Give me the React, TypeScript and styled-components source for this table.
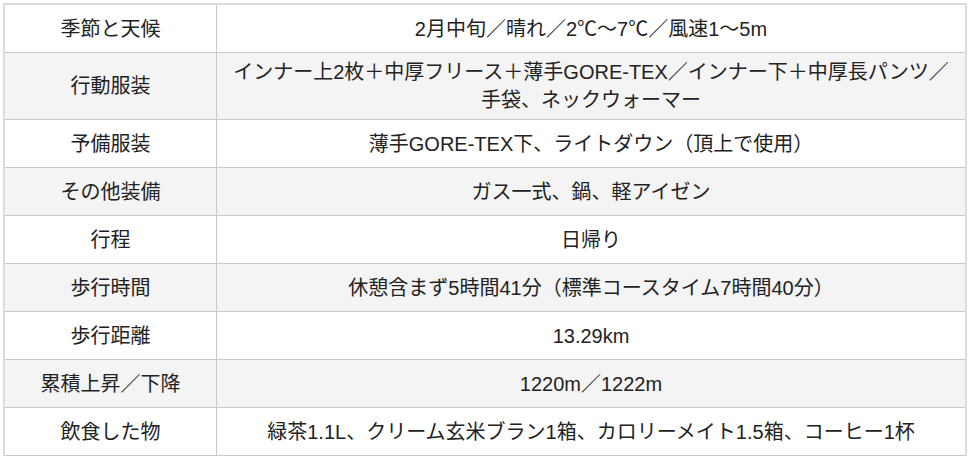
import React from 'react';
import styled, { createGlobalStyle } from 'styled-components';

const GlobalStyle = createGlobalStyle`
  html, body {
    margin: 0;
    padding: 0;
    background: #ffffff;
  }
  body {
    font-family: "Liberation Sans", "Noto Sans CJK JP", sans-serif;
    color: #222222;
  }
`;

const Page = styled.div`
  padding: 3px;
`;

const Table = styled.table`
  width: 964px;
  border-collapse: separate;
  border-spacing: 0;
  border: 2px solid #dcdcdc;
  table-layout: fixed;
`;

const Row = styled.tr<{ $shaded: boolean }>`
  background: ${p => (p.$shaded ? '#f4f4f4' : '#ffffff')};
`;

const Cell = styled.td<{ $label?: boolean }>`
  box-sizing: border-box;
  height: 48px;
  padding: 5px 10px;
  font-size: 20px;
  line-height: 28px;
  text-align: center;
  vertical-align: middle;
  border-bottom: 1px solid #c9c9c9;
  border-right: ${p => (p.$label ? '1px solid #c9c9c9' : 'none')};
  width: ${p => (p.$label ? '212px' : 'auto')};
  white-space: nowrap;
`;

const rows: Array<{ label: string; value: React.ReactNode }> = [
  { label: '季節と天候', value: '2月中旬／晴れ／2℃〜7℃／風速1〜5m' },
  {
    label: '行動服装',
    value: (
      <>
        インナー上2枚＋中厚フリース＋薄手GORE-TEX／インナー下＋中厚長パンツ／
        <br />
        手袋、ネックウォーマー
      </>
    ),
  },
  { label: '予備服装', value: '薄手GORE-TEX下、ライトダウン（頂上で使用）' },
  { label: 'その他装備', value: 'ガス一式、鍋、軽アイゼン' },
  { label: '行程', value: '日帰り' },
  { label: '歩行時間', value: '休憩含まず5時間41分（標準コースタイム7時間40分）' },
  { label: '歩行距離', value: '13.29km' },
  { label: '累積上昇／下降', value: '1220m／1222m' },
  { label: '飲食した物', value: '緑茶1.1L、クリーム玄米ブラン1箱、カロリーメイト1.5箱、コーヒー1杯' },
];

const App: React.FC = () => {
  return (
    <Page>
      <GlobalStyle />
      <Table>
        <tbody>
          {rows.map((row, i) => (
            <Row key={row.label} $shaded={i % 2 === 1}>
              <Cell $label>{row.label}</Cell>
              <Cell>{row.value}</Cell>
            </Row>
          ))}
        </tbody>
      </Table>
    </Page>
  );
};

export default App;
